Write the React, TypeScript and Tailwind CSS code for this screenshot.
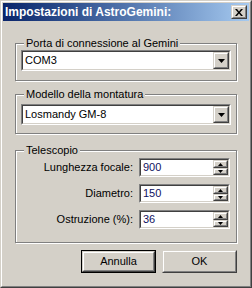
import React from "react";

const font = { fontFamily: '"Liberation Sans", Arial, sans-serif' };

function Sunken({ className, children }: { className?: string; children: React.ReactNode }) {
  return (
    <div className={"border border-t-[#808080] border-l-[#808080] border-b-white border-r-white " + (className ?? "")}>
      <div className="h-full border border-t-[#404040] border-l-[#404040] border-b-[#D4D0C8] border-r-[#D4D0C8] bg-white flex">
        {children}
      </div>
    </div>
  );
}

function Raised({ className, children }: { className?: string; children?: React.ReactNode }) {
  return (
    <div className={"border border-t-[#D4D0C8] border-l-[#D4D0C8] border-b-[#404040] border-r-[#404040] bg-[#D4D0C8] " + (className ?? "")}>
      <div className="h-full border border-t-white border-l-white border-b-[#808080] border-r-[#808080] flex items-center justify-center">
        {children}
      </div>
    </div>
  );
}

function Combo({ value }: { value: string }) {
  return (
    <Sunken className="h-[21px]">
      <span className="flex-1 pl-[2px] text-[11px] leading-[17px] text-black">{value}</span>
      <Raised className="w-[16px] h-[17px]">
        <svg width="7" height="4" viewBox="0 0 7 4">
          <path d="M0 0h7L3.5 4z" fill="#000" />
        </svg>
      </Raised>
    </Sunken>
  );
}

function Spin({ value }: { value: string }) {
  return (
    <Sunken className="h-[19px] w-[91px]">
      <span className="flex-1 pl-[2px] text-[11px] leading-[15px] text-[#101060]">{value}</span>
      <div className="flex flex-col">
        <Raised className="w-[15px] h-[8px]">
          <svg width="5" height="3" viewBox="0 0 5 3">
            <path d="M2.5 0L5 3H0z" fill="#000" />
          </svg>
        </Raised>
        <Raised className="w-[15px] h-[7px]">
          <svg width="5" height="3" viewBox="0 0 5 3">
            <path d="M0 0h5L2.5 3z" fill="#000" />
          </svg>
        </Raised>
      </div>
    </Sunken>
  );
}

function Group({ label, className, children }: { label: string; className?: string; children: React.ReactNode }) {
  return (
    <fieldset
      className={"border border-[#808080] px-[5px] shadow-[inset_1px_1px_0_#fff,1px_1px_0_#fff] " + (className ?? "")}
    >
      <legend className="ml-[3px] px-[2px] bg-[#D4D0C8] text-[11px] leading-[13px] text-black">{label}</legend>
      {children}
    </fieldset>
  );
}

export default function App() {
  return (
    <div style={font} className="w-[252px] h-[288px] bg-[#D4D0C8] select-none">
      <div className="h-full border border-t-[#D4D0C8] border-l-[#D4D0C8] border-b-[#404040] border-r-[#404040]">
        <div className="h-full border border-t-white border-l-white border-b-[#808080] border-r-[#808080] p-px flex flex-col">
          <div className="h-[18px] bg-gradient-to-r from-[#0A246A] to-[#A6CAF0] flex items-center justify-between pl-[2px] pr-[2px]">
            <span className="text-white font-bold text-[12px] leading-[14px]">Impostazioni di AstroGemini:</span>
            <Raised className="w-[16px] h-[14px]">
              <svg width="8" height="7" viewBox="0 0 8 7">
                <path d="M0 0h2l2 2.5L6 0h2L5 3.5 8 7H6L4 4.5 2 7H0l3-3.5z" fill="#000" />
              </svg>
            </Raised>
          </div>
          <div className="flex-1 pt-[16px] px-[12px] flex flex-col">
            <Group label="Porta di connessione al Gemini" className="pb-[9px]">
              <Combo value="COM3" />
            </Group>
            <Group label="Modello della montatura" className="mt-[7px] pt-[3px] pb-[8px]">
              <Combo value="Losmandy GM-8" />
            </Group>
            <Group label="Telescopio" className="mt-[10px] pt-[1px] pb-[13px]">
              <div className="flex flex-col gap-[7px] pr-[1px]">
                {[
                  ["Lunghezza focale:", "900"],
                  ["Diametro:", "150"],
                  ["Ostruzione (%):", "36"],
                ].map(([l, v]) => (
                  <div key={l} className="flex items-center justify-end gap-[6px]">
                    <span className="text-[11px] text-black">{l}</span>
                    <Spin value={v} />
                  </div>
                ))}
              </div>
            </Group>
            <div className="flex justify-end gap-[6px] mt-[7px] pr-0">
              <div className="border border-black">
                <Raised className="w-[73px] h-[21px]">
                  <span className="text-[11px] text-black">Annulla</span>
                </Raised>
              </div>
              <Raised className="w-[75px] h-[23px]">
                <span className="text-[11px] text-black">OK</span>
              </Raised>
            </div>
          </div>
        </div>
      </div>
    </div>
  );
}
